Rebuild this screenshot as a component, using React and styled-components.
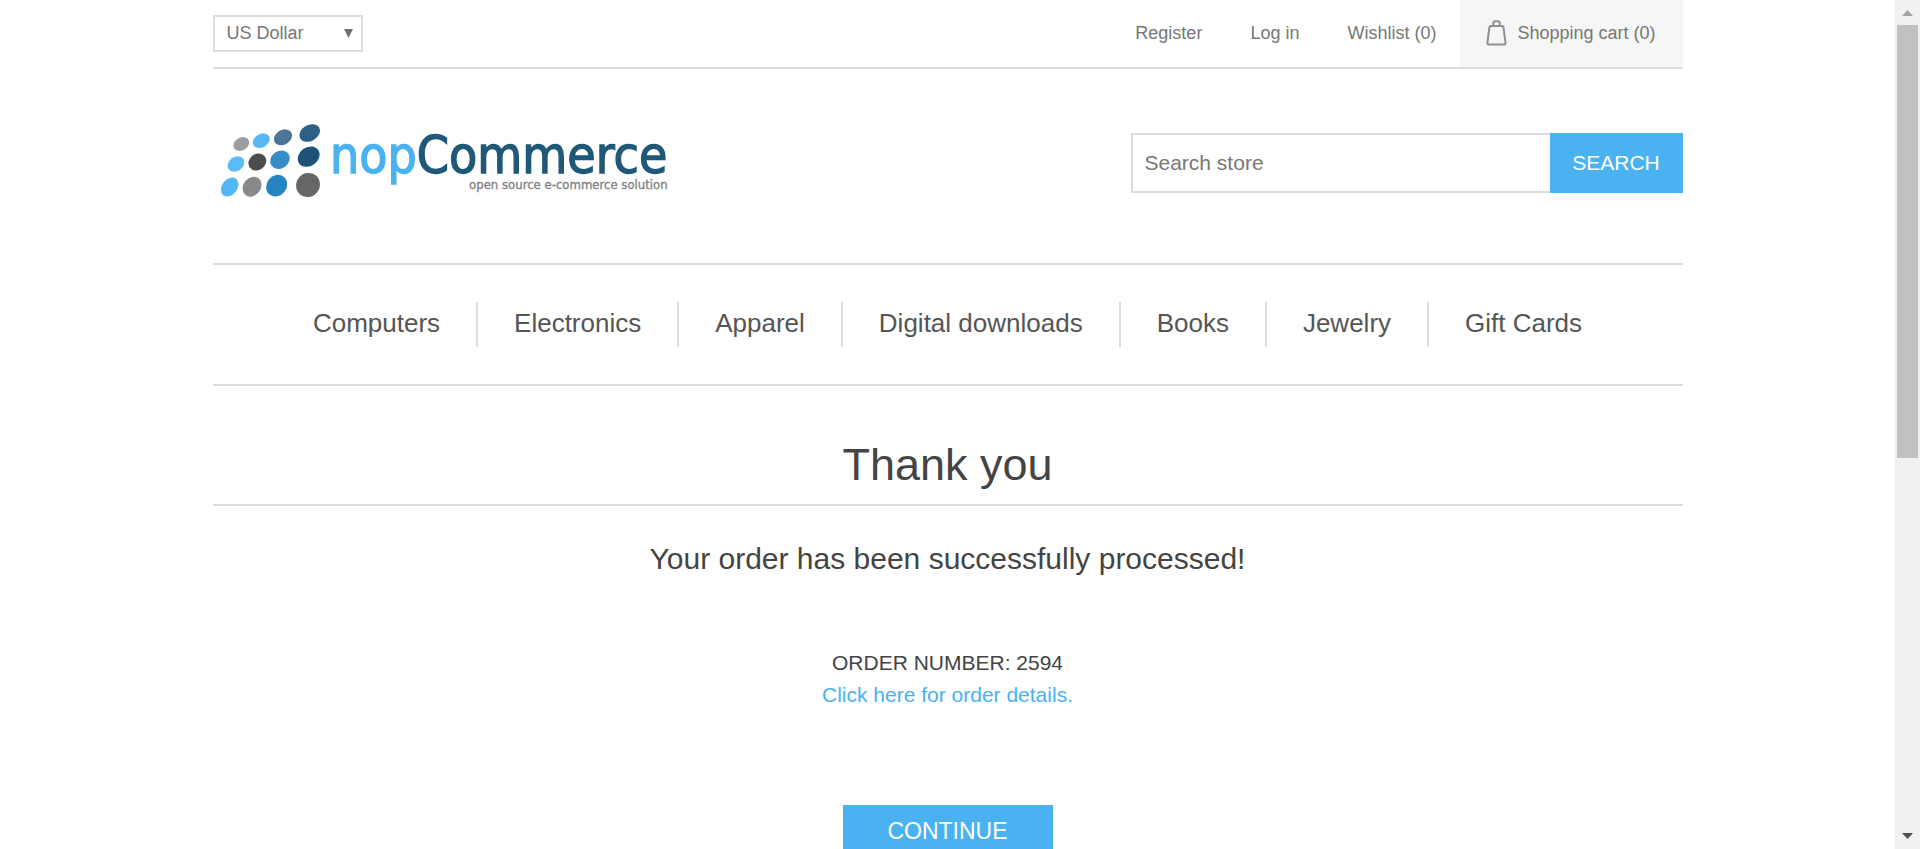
import React from 'react';
import styled, { createGlobalStyle } from 'styled-components';

const LINE = '#ddd';
const BLUE = '#4ab2f1';

const GlobalStyle = createGlobalStyle`
  *, *::before, *::after { box-sizing: border-box; }
  body {
    margin: 0;
    overflow: hidden;
    background: #fff;
    color: #777;
    font: 18px/22px "Liberation Sans", Arial, Helvetica, sans-serif;
  }
  a { color: inherit; text-decoration: none; }
  ul { margin: 0; padding: 0; list-style: none; }
  button, input, select { font-family: inherit; border-radius: 0; outline: none; }
`;

const Shell = styled.div`
  display: flex;
  height: 100vh;
`;

const Page = styled.div`
  flex: 1;
  min-width: 0;
  overflow: hidden;
`;

const Container = styled.div`
  width: 100%;
  max-width: 1470px;
  margin: 0 auto;
`;

const TopBar = styled.div`
  display: flex;
  justify-content: space-between;
  align-items: stretch;
  min-height: 69px;
  border-bottom: 2px solid ${LINE};
`;

const CurrencyField = styled.div`
  display: grid;
  align-self: center;
  align-items: center;
  width: 150px;
  > * { grid-area: 1 / 1; }
`;

const CurrencySelect = styled.select`
  appearance: none;
  width: 100%;
  height: 37px;
  padding: 0 12px 2px;
  border: 2px solid ${LINE};
  background: #fff;
  color: #777;
  font-size: 18px;
`;

const SelectArrow = styled.svg`
  justify-self: end;
  width: 9px;
  height: 9px;
  margin-right: 10px;
  pointer-events: none;
`;

const AccountLinks = styled.ul`
  display: flex;
  align-items: stretch;
`;

const AccountLink = styled.a`
  display: flex;
  align-items: center;
  height: 100%;
  padding: 0 24px 2px;
`;

const CartLink = styled(AccountLink)`
  gap: 10px;
  padding: 0 27px 2px 26px;
  background: #f6f6f6;
`;

const Header = styled.header`
  display: flex;
  justify-content: space-between;
  align-items: center;
  gap: 24px;
  padding: 44px 0 50px;
  border-bottom: 2px solid ${LINE};
`;

const LogoSvg = styled.svg`
  display: block;
  width: 470px;
  height: 100px;
`;

const SearchForm = styled.form`
  display: flex;
  width: 552px;
  height: 60px;
`;

const SearchInput = styled.input`
  flex: 1;
  min-width: 0;
  padding: 0 12px;
  border: 2px solid ${LINE};
  border-right: 0;
  background: #fff;
  color: #777;
  font-size: 21px;
  &::placeholder { color: #777; opacity: 1; }
`;

const SearchButton = styled.button`
  width: 133px;
  padding: 0;
  border: 0;
  background: ${BLUE};
  color: #fff;
  font-size: 21px;
  text-transform: uppercase;
`;

const Menu = styled.ul`
  display: flex;
  justify-content: center;
  padding: 37px 0;
  border-bottom: 2px solid ${LINE};
`;

const MenuItem = styled.li`
  padding: 0 36px 2px;
  & + & { border-left: 2px solid ${LINE}; }
`;

const MenuLink = styled.a`
  display: block;
  color: #555;
  font-size: 26px;
  line-height: 43px;
`;

const Main = styled.main`
  padding-top: 53px;
  color: #444;
  text-align: center;
`;

const Title = styled.h1`
  margin: 0;
  padding-bottom: 13px;
  border-bottom: 2px solid ${LINE};
  font-size: 45px;
  font-weight: normal;
  line-height: 52px;
`;

const Message = styled.p`
  margin: 35px 0 70px;
  font-size: 30px;
  line-height: 36px;
`;

const Details = styled.div`
  margin-bottom: 94px;
  font-size: 21px;
  line-height: 32px;
`;

const DetailsLink = styled.a`
  color: ${BLUE};
`;

const ContinueButton = styled.button`
  min-width: 210px;
  height: 54px;
  padding: 0 36px 2px;
  border: 0;
  background: ${BLUE};
  color: #fff;
  font-size: 23px;
  text-transform: uppercase;
`;

const ScrollBar = styled.div`
  display: flex;
  flex-direction: column;
  width: 25px;
  background: #f1f1f1;
`;

const ScrollEnd = styled.svg`
  display: block;
  width: 25px;
  height: 25px;
  fill: ${(p) => p.$color};
`;

const ScrollTrack = styled.div`
  flex: 1;
  padding: 0 2px;
`;

const ScrollThumb = styled.div`
  height: 54.2%;
  background: #c1c1c1;
`;

const LOGO_DOTS = [
  { x: 109, y: 102, a: 25, b: 19, fill: '#9a9da1' },
  { x: 169, y: 92, a: 27, b: 20, fill: '#57b8f8' },
  { x: 234, y: 82, a: 29, b: 22, fill: '#4a7596' },
  { x: 314, y: 69, a: 33, b: 24, fill: '#2c6085' },
  { x: 93, y: 162, a: 27, b: 21, fill: '#5cbcfa' },
  { x: 157, y: 156, a: 28, b: 24, fill: '#4c4c4e' },
  { x: 225, y: 149, a: 31, b: 26, fill: '#368dc6' },
  { x: 311, y: 140, a: 35, b: 28, fill: '#1d5379' },
  { x: 74, y: 231, a: 31, b: 23, fill: '#53b6f6' },
  { x: 141, y: 230, a: 32, b: 26, fill: '#88898b' },
  { x: 215, y: 227, a: 34, b: 30, fill: '#2585c2' },
  { x: 309, y: 225, a: 37, b: 35, fill: '#666668' },
];

const dotTilt = (y) => {
  if (y > 200) return -52;
  return y > 120 ? -36 : -30;
};

const Logo = () => (
  <LogoSvg viewBox="24 9 1410 300" role="img" aria-label="nopCommerce">
    {LOGO_DOTS.map((d) => (
      <ellipse
        key={`${d.x}-${d.y}`}
        cx={d.x}
        cy={d.y}
        rx={d.a}
        ry={d.b}
        fill={d.fill}
        transform={`rotate(${dotTilt(d.y)} ${d.x} ${d.y})`}
      />
    ))}
    <text
      x="375"
      y="190"
      fontFamily='"DejaVu Sans Condensed", "DejaVu Sans", sans-serif'
      fontStretch="condensed"
      fontSize="154"
      fill={BLUE}
      stroke={BLUE}
      strokeWidth="4"
    >
      nop
      <tspan fill="#1f5878" stroke="#1f5878">Commerce</tspan>
    </text>
    <text
      x="1388"
      y="236"
      textAnchor="end"
      fontFamily='"DejaVu Sans Condensed", "DejaVu Sans", sans-serif'
      fontSize="39"
      fill="#808386"
      stroke="#808386"
      strokeWidth="1"
    >
      open source e-commerce solution
    </text>
  </LogoSvg>
);

const BagIcon = () => (
  <svg width="21" height="26" viewBox="0 0 21 26" fill="none" stroke="#8f8f8f" strokeWidth="2" aria-hidden="true">
    <path d="M5 6h11a1.500 1.500 0 0 1 1.500 1.300l2 15.500a1.600 1.600 0 0 1-1.600 1.800H3a1.600 1.600 0 0 1-1.600-1.800l2-15.500A1.500 1.500 0 0 1 5 6z" />
    <path d="M7.300 6V3.300a2 2 0 0 1 2-2h2.400a2 2 0 0 1 2 2V6" />
  </svg>
);

const ACCOUNT = ['Register', 'Log in', 'Wishlist (0)'];
const CATEGORIES = ['Computers', 'Electronics', 'Apparel', 'Digital downloads', 'Books', 'Jewelry', 'Gift Cards'];

export default function App() {
  return (
    <>
      <GlobalStyle />
      <Shell>
        <Page>
          <Container>
            <TopBar>
              <CurrencyField>
                <CurrencySelect aria-label="Currency" defaultValue="usd">
                  <option value="usd">US Dollar</option>
                  <option value="eur">Euro</option>
                </CurrencySelect>
                <SelectArrow viewBox="0 0 9 9" aria-hidden="true">
                  <path d="M0 0h9L4.500 9z" fill="#707070" />
                </SelectArrow>
              </CurrencyField>
              <AccountLinks>
                {ACCOUNT.map((label) => (
                  <li key={label}>
                    <AccountLink href="#">{label}</AccountLink>
                  </li>
                ))}
                <li>
                  <CartLink href="#">
                    <BagIcon />
                    Shopping cart (0)
                  </CartLink>
                </li>
              </AccountLinks>
            </TopBar>

            <Header>
              <a href="#">
                <Logo />
              </a>
              <SearchForm role="search" onSubmit={(e) => e.preventDefault()}>
                <SearchInput type="text" placeholder="Search store" aria-label="Search store" />
                <SearchButton type="submit">Search</SearchButton>
              </SearchForm>
            </Header>

            <nav>
              <Menu>
                {CATEGORIES.map((name) => (
                  <MenuItem key={name}>
                    <MenuLink href="#">{name}</MenuLink>
                  </MenuItem>
                ))}
              </Menu>
            </nav>

            <Main>
              <Title>Thank you</Title>
              <Message>Your order has been successfully processed!</Message>
              <Details>
                <div>ORDER NUMBER: 2594</div>
                <DetailsLink href="#">Click here for order details.</DetailsLink>
              </Details>
              <ContinueButton type="button">Continue</ContinueButton>
            </Main>
          </Container>
        </Page>

        <ScrollBar aria-hidden="true">
          <ScrollEnd viewBox="0 0 25 25" $color="#a3a3a3">
            <path d="M7 16h11l-5.500-6z" />
          </ScrollEnd>
          <ScrollTrack>
            <ScrollThumb />
          </ScrollTrack>
          <ScrollEnd viewBox="0 0 25 25" $color="#505050">
            <path d="M7 9h11l-5.500 6z" />
          </ScrollEnd>
        </ScrollBar>
      </Shell>
    </>
  );
}
